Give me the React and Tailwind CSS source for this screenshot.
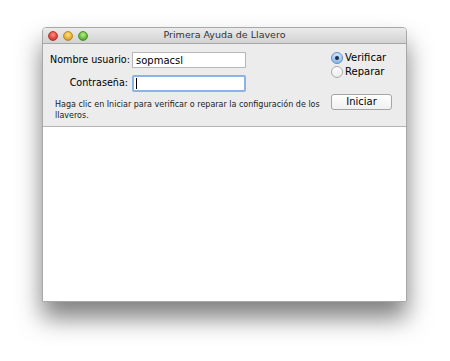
import React from "react";

const font = { fontFamily: '"DejaVu Sans", "Liberation Sans", sans-serif' };

const TrafficLight = ({ color, ring }) => (
  <span
    className={`w-[10px] h-[10px] rounded-full border ${ring}`}
    style={{ background: color }}
  ></span>
);

const Radio = ({ checked, label }) => (
  <label className="flex items-center gap-[2px] text-[10px] text-black leading-none">
    <span
      className={`flex items-center justify-center w-[12px] h-[12px] rounded-full border ${
        checked
          ? "border-[#5a8ed0] bg-gradient-to-b from-[#cfe3f8] to-[#8bb8ea]"
          : "border-[#a9a9a9] bg-gradient-to-b from-white to-[#ececec]"
      }`}
    >
      {checked && <span className="w-[4px] h-[4px] rounded-full bg-[#1d2d45]"></span>}
    </span>
    {label}
  </label>
);

export default function App() {
  return (
    <div className="w-[450px] h-[361px] bg-white pt-[27px] pl-[42px]" style={font}>
      <div className="w-[365px] h-[275px] flex flex-col rounded-t-[4px] border border-[#a8a8a8] shadow-[0_16px_24px_rgba(0,0,0,0.5)] overflow-hidden">
        {/* title bar */}
        <div className="relative h-[16px] flex items-center bg-gradient-to-b from-[#ebebeb] to-[#d2d2d2] border-b border-[#a6a6a6]">
          <div className="flex gap-[5px] pl-[5px]">
            <TrafficLight color="radial-gradient(circle at 50% 35%, #ff8d85, #e0443a 60%, #a3231b)" ring="border-[#b3382f]" />
            <TrafficLight color="radial-gradient(circle at 50% 35%, #ffe08a, #e8ac2a 60%, #b07a10)" ring="border-[#b78a2a]" />
            <TrafficLight color="radial-gradient(circle at 50% 35%, #b8f08a, #62bb3a 60%, #367a1a)" ring="border-[#4f8f2e]" />
          </div>
          <div className="absolute inset-0 flex items-center justify-center text-[9.5px] text-[#333]">
            Primera Ayuda de Llavero
          </div>
        </div>

        {/* form panel */}
        <div className="h-[83px] bg-[#ececec] border-b border-[#b5b5b5] flex pl-[7px] pr-[14px] pt-[8px]">
          <div className="flex flex-col w-[280px]">
            <div className="flex items-center gap-[4px] h-[16px] text-[9.6px] text-black whitespace-nowrap">
              <span className="w-[78px] shrink-0 text-right">Nombre usuario:</span>
              <div className="w-[114px] h-[16px] bg-white border border-[#b7b7b7] flex items-center pl-[3px] text-[10px]">
                sopmacsl
              </div>
            </div>
            <div className="flex items-center gap-[4px] h-[17px] mt-[7px] text-[9.6px] text-black whitespace-nowrap">
              <span className="w-[78px] shrink-0 text-right">Contraseña:</span>
              <div className="w-[114px] h-[17px] bg-white border-2 border-[#8db3e2] rounded-[2px] flex items-center pl-[2px]">
                <span className="w-[1px] h-[11px] bg-black"></span>
              </div>
            </div>
            <p className="mt-[7px] ml-[5px] text-[8px] leading-[11px] text-[#222] w-[275px]">
              Haga clic en Iniciar para verificar o reparar la configuración de los llaveros.
            </p>
          </div>
          <div className="flex flex-col items-start ml-auto">
            <Radio checked label="Verificar" />
            <div className="mt-[2px]">
              <Radio label="Reparar" />
            </div>
            <button className="mt-[16px] w-[61px] h-[16px] rounded-[3px] border border-[#a5a5a5] bg-gradient-to-b from-white to-[#f0f0f0] text-[10px] text-black leading-none">
              Iniciar
            </button>
          </div>
        </div>

        {/* results area */}
        <div className="flex-1 bg-white"></div>
      </div>
    </div>
  );
}
